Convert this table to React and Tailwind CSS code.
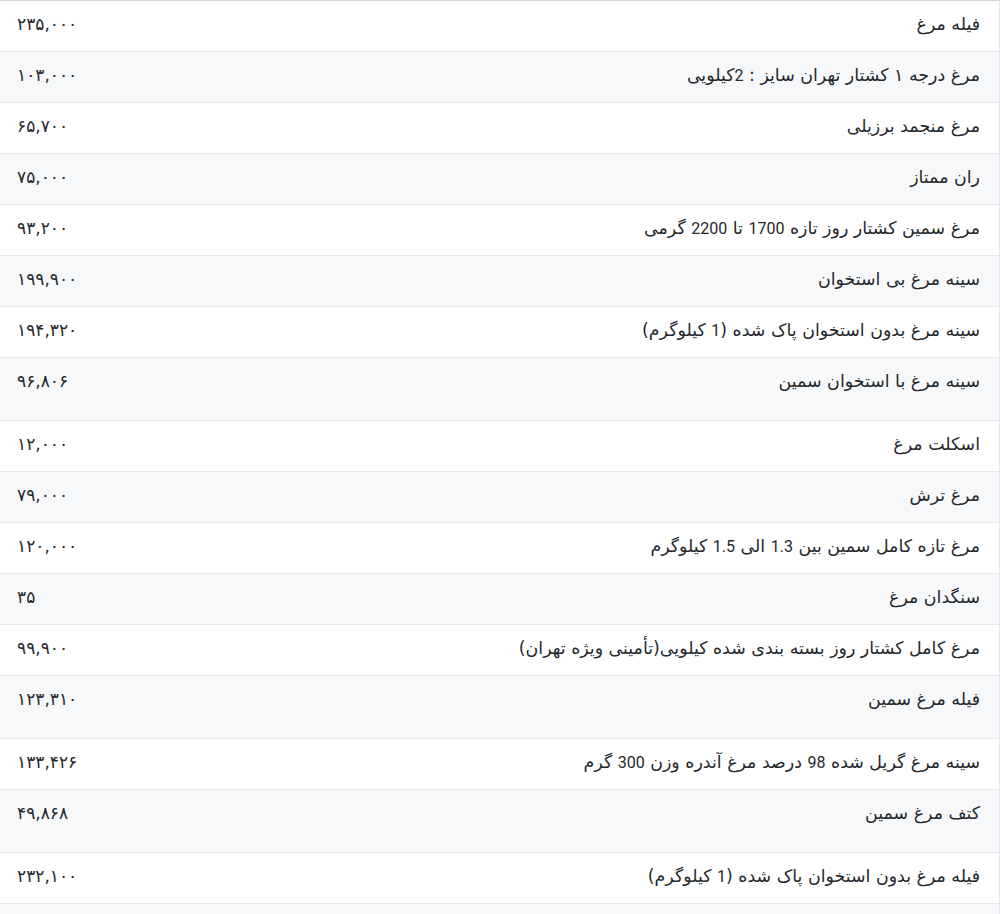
import React from "react";

const rows = [
  ["فیله مرغ", "۲۳۵,۰۰۰", false],
  ["مرغ درجه ١ کشتار تهران سایز : 2کیلویی", "۱۰۳,۰۰۰", false],
  ["مرغ منجمد برزیلی", "۶۵,۷۰۰", false],
  ["ران ممتاز", "۷۵,۰۰۰", false],
  ["مرغ سمین کشتار روز تازه 1700 تا 2200 گرمی", "۹۳,۲۰۰", false],
  ["سینه مرغ بی استخوان", "۱۹۹,۹۰۰", false],
  ["سینه مرغ بدون استخوان پاک شده (1 کیلوگرم)", "۱۹۴,۳۲۰", false],
  ["سینه مرغ با استخوان سمین", "۹۶,۸۰۶", true],
  ["اسکلت مرغ", "۱۲,۰۰۰", false],
  ["مرغ ترش", "۷۹,۰۰۰", false],
  ["مرغ تازه کامل سمین بین 1.3 الی 1.5 کیلوگرم", "۱۲۰,۰۰۰", false],
  ["سنگدان مرغ", "۳۵", false],
  ["مرغ کامل کشتار روز بسته بندی شده کیلویی(تأمینی ویژه تهران)", "۹۹,۹۰۰", false],
  ["فیله مرغ سمین", "۱۲۳,۳۱۰", true],
  ["سینه مرغ گریل شده 98 درصد مرغ آندره وزن 300 گرم", "۱۳۳,۴۲۶", false],
  ["کتف مرغ سمین", "۴۹,۸۶۸", true],
  ["فیله مرغ بدون استخوان پاک شده (1 کیلوگرم)", "۲۳۲,۱۰۰", false],
  ["", "", false],
];

function Name({ text }) {
  const parts = text.split(/([0-9][0-9.]*)/);
  return (
    <span className="pr-[19px] text-[17.4px]">
      {parts.map((p, i) =>
        i % 2 === 1 ? (
          <span key={i} className="text-[16px]" style={{ fontFamily: "Roboto, sans-serif" }}>
            {p}
          </span>
        ) : (
          <React.Fragment key={i}>{p}</React.Fragment>
        )
      )}
    </span>
  );
}

export default function App() {
  return (
    <div
      className="w-[1000px] h-[914px] overflow-hidden bg-white text-[#24282c]"
      style={{ fontFamily: '"DejaVu Sans", sans-serif' }}
    >
      <div dir="rtl" className="border-t border-t-[#d4d6d9] border-r border-r-[#e3e5e8]">
        {rows.map(([name, price, tall], i) => (
          <div
            key={i}
            className={
              "flex justify-between items-start border-b border-b-[#e6e8eb] pt-[11px] leading-[24px] " +
              (tall ? "h-[63px] " : "h-[51px] ") +
              (i % 2 === 1 ? "bg-[#f7f8fa]" : "bg-white")
            }
          >
            <Name text={name} />
            <span dir="ltr" className="pl-[17px] text-[17px]">{price}</span>
          </div>
        ))}
      </div>
    </div>
  );
}
